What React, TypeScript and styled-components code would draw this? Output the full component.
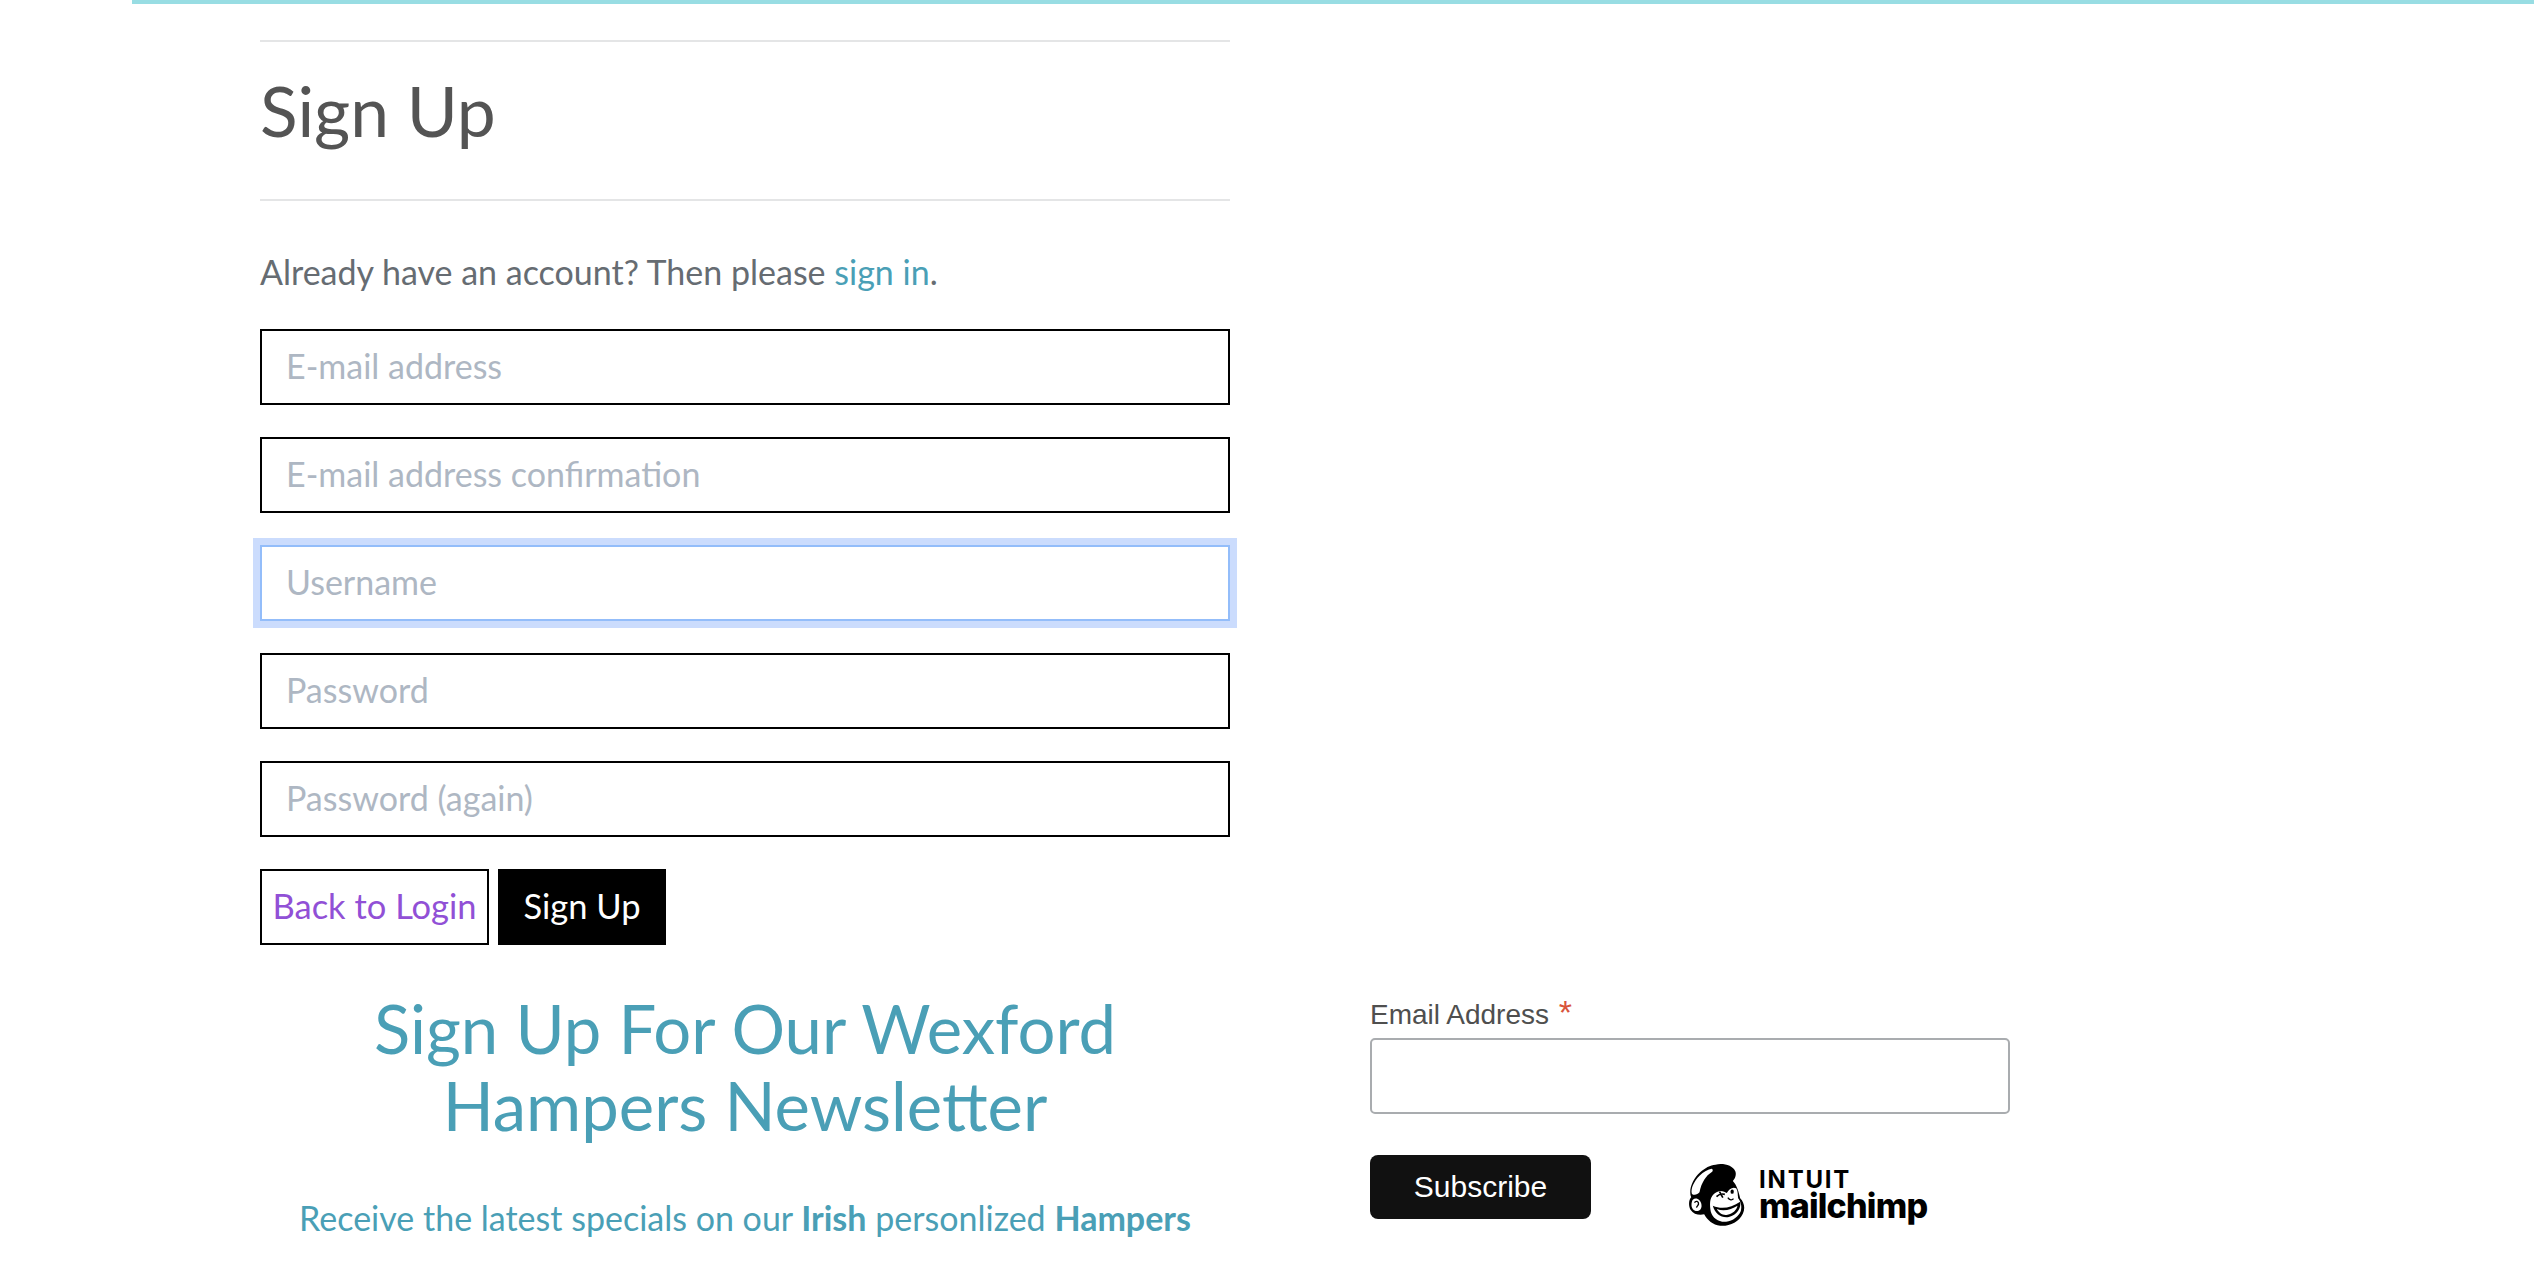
import styled, { createGlobalStyle } from 'styled-components';

const GlobalStyle = createGlobalStyle`
  html, body {
    margin: 0;
    padding: 0;
    background: #fff;
  }
  body {
    font-family: 'Lato', 'Open Sans', sans-serif;
    overflow: hidden;
  }
`;

const Page = styled.div`
  width: 2534px;
  height: 1282px;
  overflow: hidden;
`;

const TopBar = styled.div`
  height: 4px;
  margin-left: 132px;
  background: #98dde3;
`;

const Content = styled.main`
  padding: 36px 0 0 260px;
`;

const SignupColumn = styled.section`
  width: 970px;
`;

const TitleBox = styled.div`
  border-top: 2px solid #e4e5e6;
  border-bottom: 2px solid #e4e5e6;
  height: 157px;
  display: flex;
  align-items: flex-start;
`;

const Title = styled.h1`
  margin: 29px 0 0;
  font-size: 69.5px;
  line-height: 78px;
  font-weight: 400;
  color: #545454;
`;

const Intro = styled.p`
  margin: 51px 0 0;
  font-size: 34px;
  line-height: 40px;
  font-weight: 400;
  color: #666c72;
`;

const TealLink = styled.a`
  color: #4a9fb6;
`;

const Form = styled.form`
  margin-top: 37px;
  display: flex;
  flex-direction: column;
  gap: 32px;
`;

const Field = styled.div<{ $focused?: boolean }>`
  box-sizing: border-box;
  height: 76px;
  padding: 0 24px 3px;
  display: flex;
  align-items: center;
  font-size: 34px;
  font-weight: 400;
  color: #aeb7c3;
  background: #fff;
  border: 2px solid ${(p) => (p.$focused ? '#93bdfa' : '#000')};
  box-shadow: ${(p) => (p.$focused ? '0 0 0 7px #cbdcfd' : 'none')};
`;

const Actions = styled.div`
  display: flex;
  gap: 9px;
`;

const OutlineButton = styled.a`
  box-sizing: border-box;
  width: 229px;
  height: 76px;
  padding-bottom: 3px;
  display: flex;
  align-items: center;
  justify-content: center;
  border: 2px solid #000;
  font-size: 34.5px;
  font-weight: 400;
  color: #9150d6;
`;

const SolidButton = styled.button`
  width: 168px;
  height: 76px;
  padding: 0 0 3px;
  border: 0;
  background: #000;
  color: #fff;
  font-family: inherit;
  font-size: 34.5px;
  font-weight: 400;
`;

const Bottom = styled.div`
  display: flex;
  gap: 140px;
`;

const Newsletter = styled.section`
  width: 970px;
  margin-top: 45px;
  text-align: center;
  color: #4a9fb6;
`;

const NewsTitle = styled.h2`
  margin: 0;
  font-size: 67px;
  line-height: 77px;
  font-weight: 400;
`;

const NewsText = styled.p`
  margin: 54px 0 0;
  font-size: 34px;
  line-height: 40px;
  font-weight: 400;

  strong {
    font-weight: 700;
  }
`;

const SubscribeBox = styled.section`
  width: 640px;
  margin-top: 52px;
  font-family: 'Liberation Sans', Arial, sans-serif;
`;

const FieldLabel = styled.label`
  display: block;
  font-size: 28px;
  line-height: 34px;
  color: #4f4f4f;
`;

const Required = styled.span`
  color: #d9543c;
  font-size: 34px;
  line-height: 30px;
  margin-left: 2px;
`;

const EmailBox = styled.div`
  box-sizing: border-box;
  height: 76px;
  margin-top: 6px;
  border: 2px solid #a9acaf;
  border-radius: 5px;
`;

const SubscribeRow = styled.div`
  margin-top: 41px;
  display: flex;
  align-items: flex-start;
`;

const SubscribeButton = styled.button`
  width: 221px;
  height: 64px;
  padding: 0;
  border: 0;
  border-radius: 8px;
  background: #111;
  color: #fff;
  font-family: inherit;
  font-size: 30px;
`;

const Badge = styled.div`
  margin: 8px 0 0 95px;
  display: flex;
  align-items: flex-start;
  gap: 13px;
  color: #000;
`;

const Wordmark = styled.div`
  display: flex;
  flex-direction: column;
  font-family: 'Inter', sans-serif;
`;

const Intuit = styled.span`
  margin-top: 5px;
  font-size: 24px;
  line-height: 24px;
  font-weight: 700;
  letter-spacing: 1.8px;
  white-space: nowrap;
`;

const Mailchimp = styled.span`
  font-size: 34px;
  line-height: 28px;
  font-weight: 800;
  letter-spacing: -0.8px;
  white-space: nowrap;
`;

// drawn in the coordinates of a 3x crop of the logo
const Mascot = () => (
  <svg width="60" height="63" viewBox="21 12 177 189">
    <path
      d="M35 115C26 92 40 60 62 40C76 27 92 18 108 17C130 12 160 18 168 38C171 50 166 60 160 66C172 78 178 100 182 118C194 130 198 148 190 164C178 190 150 202 122 200C100 198 84 184 74 166C60 170 42 166 33 152C26 140 28 122 35 115Z"
      fill="#000"
    />
    <path d="M37 104C33 88 44 66 60 50C72 38 86 30 97 29C101 31 101 36 96 40C80 50 66 70 60 100C54 108 42 110 37 104Z" fill="#fff" />
    <path d="M40 122C50 114 64 122 66 138C67 148 62 156 52 156C42 156 36 148 36 138C36 132 37 126 40 122Z" fill="#fff" />
    <path d="M45 131C49 124 58 127 57 135C56 140 52 141 51 146" fill="none" stroke="#000" strokeWidth="4" />
    <path d="M92 128C94 112 106 98 122 96C132 96 138 100 142 102C148 90 160 82 170 88C176 96 174 108 176 118C184 128 188 142 184 156C178 172 160 186 140 188C118 190 100 178 94 158C92 148 91 138 92 128Z" fill="#fff" />
    <path d="M111 113C118 106 128 104 136 106M120 98L130 116" fill="none" stroke="#000" strokeWidth="5" />
    <ellipse cx="158" cy="98" rx="5" ry="6.5" fill="#000" />
    <path d="M145 116C150 124 158 124 162 119" fill="none" stroke="#000" strokeWidth="4" />
    <path d="M100 140C126 152 156 146 182 128C186 146 172 168 148 174C126 178 106 164 100 140Z" fill="#000" />
    <path d="M112 150C132 158 156 152 174 140C172 152 160 164 144 167C130 170 118 162 112 150Z" fill="#fff" />
  </svg>
);

const inputs = ['E-mail address', 'E-mail address confirmation', 'Username', 'Password', 'Password (again)'];

export default function App() {
  return (
    <Page>
      <GlobalStyle />
      <TopBar />
      <Content>
        <SignupColumn>
          <TitleBox>
            <Title>Sign Up</Title>
          </TitleBox>
          <Intro>
            Already have an account? Then please <TealLink>sign in</TealLink>.
          </Intro>
          <Form>
            {inputs.map((label) => (
              <Field key={label} $focused={label === 'Username'}>
                {label}
              </Field>
            ))}
            <Actions>
              <OutlineButton>Back to Login</OutlineButton>
              <SolidButton type="button">Sign Up</SolidButton>
            </Actions>
          </Form>
        </SignupColumn>
        <Bottom>
          <Newsletter>
            <NewsTitle>
              Sign Up For Our Wexford
              <br />
              Hampers Newsletter
            </NewsTitle>
            <NewsText>
              Receive the latest specials on our <strong>Irish</strong> personlized <strong>Hampers</strong>
            </NewsText>
          </Newsletter>
          <SubscribeBox>
            <FieldLabel>
              Email Address <Required>*</Required>
            </FieldLabel>
            <EmailBox />
            <SubscribeRow>
              <SubscribeButton type="button">Subscribe</SubscribeButton>
              <Badge>
                <Mascot />
                <Wordmark>
                  <Intuit>INTUIT</Intuit>
                  <Mailchimp>mailchimp</Mailchimp>
                </Wordmark>
              </Badge>
            </SubscribeRow>
          </SubscribeBox>
        </Bottom>
      </Content>
    </Page>
  );
}
